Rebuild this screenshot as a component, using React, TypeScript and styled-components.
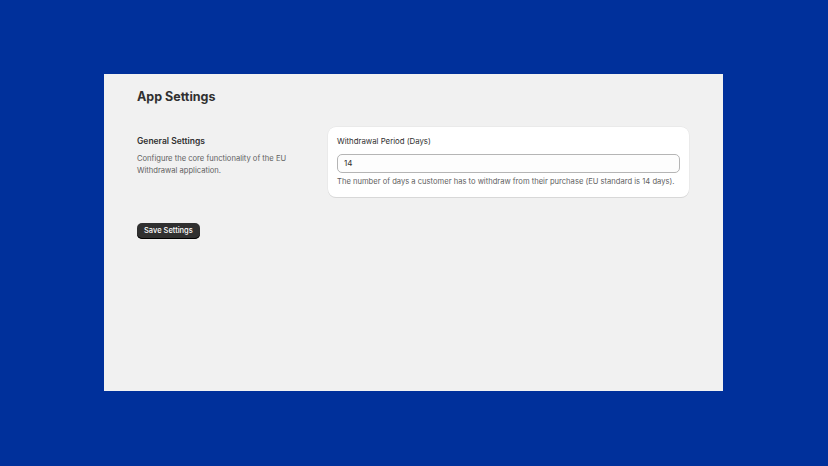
import React from "react";
import styled, { createGlobalStyle } from "styled-components";

const Global = createGlobalStyle`
  html, body { margin: 0; background: #00309b; font-family: Inter, "Noto Sans", sans-serif; }
`;
const Stage = styled.div`
  height: 466px; display: flex; align-items: flex-start; padding: 74px 0 0 104px; box-sizing: border-box;
`;
const Panel = styled.div`
  width: 619px; height: 317px; background: #f1f1f1; box-sizing: border-box; padding: 15px 34px 0 33px;
`;
const Title = styled.h1`
  margin: 0 0 22px; font-size: 12.5px; font-weight: 700; color: #303030; line-height: 16px;
`;
const Section = styled.div`
  display: grid; grid-template-columns: 191px 1fr; align-items: start;
`;
const Side = styled.div` padding-top: 8px; `;
const SideTitle = styled.h2`
  margin: 0 0 6px; font-size: 8.5px; font-weight: 600; color: #303030; line-height: 12px;
`;
const SideText = styled.p`
  margin: 0; font-size: 7.6px; color: #616161; line-height: 12px; width: 160px;
`;
const Card = styled.div`
  background: #fff; border-radius: 8px; padding: 8px 9px 9px; box-shadow: 0 1px 0 #d8d8d8, 0 0 0 0.5px #e3e3e3;
`;
const Label = styled.div` font-size: 7.8px; color: #303030; line-height: 12px; margin-bottom: 3px; `;
const Input = styled.input`
  width: 100%; box-sizing: border-box; height: 19px; border: 1px solid #8a8a8a; border-radius: 5px;
  padding: 0 6px; font: 8px Inter, sans-serif; color: #303030; background: #fdfdfd; outline: none;
  border-color: #b5b5b5;
`;
const Help = styled.div` font-size: 7.6px; color: #616161; line-height: 12px; margin-top: 3px; `;
const Button = styled.button`
  margin-top: 26px; height: 16px; padding: 0 7px; border: none; border-radius: 5px; background: #303030;
  color: #fff; font: 500 7.5px Inter, sans-serif; box-shadow: inset 0 -1px 0 #000;
`;

export default function App() {
  return (
    <>
      <Global />
      <Stage>
        <Panel>
          <Title>App Settings</Title>
          <Section>
            <Side>
              <SideTitle>General Settings</SideTitle>
              <SideText>Configure the core functionality of the EU Withdrawal application.</SideText>
            </Side>
            <Card>
              <Label>Withdrawal Period (Days)</Label>
              <Input defaultValue="14" />
              <Help>The number of days a customer has to withdraw from their purchase (EU standard is 14 days).</Help>
            </Card>
          </Section>
          <Button>Save Settings</Button>
        </Panel>
      </Stage>
    </>
  );
}
